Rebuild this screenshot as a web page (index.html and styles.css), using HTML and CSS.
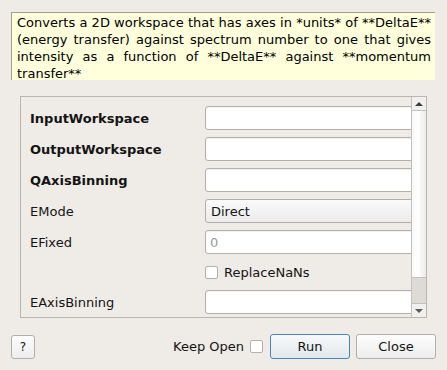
FILE: index.html
```html
<!DOCTYPE html>
<html lang="en">
<head>
    <meta charset="UTF-8">
    <title>ConvertSpectrumAxis</title>
    <link rel="stylesheet" href="styles.css">
</head>
<body>

<div class="dialog">
    <div class="description">Converts a 2D workspace that has axes in *units* of **DeltaE** (energy transfer) against spectrum number to one that gives intensity as a function of **DeltaE** against **momentum transfer**</div>

    <div class="scroll-area">
        <div class="viewport">
            <div class="props">
                <label class="name required">InputWorkspace</label>
                <input class="field" type="text">

                <label class="name required">OutputWorkspace</label>
                <input class="field" type="text">

                <label class="name required">QAxisBinning</label>
                <input class="field" type="text">

                <label class="name">EMode</label>
                <div class="field combo">Direct</div>

                <label class="name">EFixed</label>
                <input class="field" type="text" placeholder="0">

                <span class="name"></span>
                <div class="check-row"><span class="checkbox"></span>ReplaceNaNs</div>

                <label class="name">EAxisBinning</label>
                <input class="field" type="text">
            </div>
        </div>
        <div class="scrollbar">
            <div class="sb-btn sb-up"><span class="arrow-up"></span></div>
            <div class="sb-handle"></div>
            <div class="sb-track"></div>
            <div class="sb-btn sb-down"><span class="arrow-down"></span></div>
        </div>
    </div>

    <div class="buttons">
        <button class="btn help">?</button>
        <div class="spacer"></div>
        <span class="keep-open">Keep Open</span>
        <span class="checkbox"></span>
        <button class="btn run">Run</button>
        <button class="btn close">Close</button>
    </div>
</div>

</body>
</html>
```

FILE: styles.css
```css
body {
    margin: 0;
    background: #efebe7;
    font-family: 'DejaVu Sans', sans-serif;
    font-size: 13px;
    color: #141414;
}
.dialog {
    width: 447px;
    height: 370px;
    display: flex;
    flex-direction: column;
}
.description {
    margin: 12px 12px 0 11px;
    height: 68px;
    box-sizing: border-box;
    padding: 1px 4px 0 5px;
    background: #ffffdc;
    border-left: 1px solid #a19d99;
    border-top: 1px solid #a19d99;
    line-height: 17px;
    text-align: justify;
    color: #000;
}
.scroll-area {
    margin: 16px 0 0 20px;
    width: 407px;
    height: 222px;
    box-sizing: border-box;
    border: 1px solid #b9b5b1;
    display: flex;
}
.viewport {
    flex: 1;
    overflow: hidden;
}
.props {
    display: grid;
    grid-template-columns: 175px 220px;
    grid-template-rows: 24px 24px 24px 24px 24px 22px 24px;
    row-gap: 7px;
    padding: 9px 0 0 9px;
    align-items: center;
}
.name {
    white-space: nowrap;
}
.required {
    font-weight: bold;
}
.field {
    height: 24px;
    box-sizing: border-box;
    border: 1px solid #b3afab;
    border-radius: 3px;
    background: #fff;
    box-shadow: inset 0 1px 1px rgba(0, 0, 0, 0.06);
    font-family: inherit;
    font-size: 13px;
    padding: 0 4px;
    margin: 0;
    outline: none;
}
.field::placeholder {
    color: #9a9a9a;
}
.combo {
    display: flex;
    align-items: center;
    padding-left: 5px;
    background: linear-gradient(#fafafa, #ebebeb);
    box-shadow: none;
}
.check-row {
    display: flex;
    align-items: center;
    gap: 6px;
}
.checkbox {
    display: inline-block;
    width: 13px;
    height: 13px;
    box-sizing: border-box;
    border: 1px solid #b3afab;
    border-radius: 2px;
    background: #fff;
}
.scrollbar {
    width: 14px;
    border-left: 1px solid #c4c0bc;
    display: flex;
    flex-direction: column;
}
.sb-btn {
    height: 13px;
    flex-shrink: 0;
    display: flex;
    align-items: center;
    justify-content: center;
    background: #f2f0ee;
}
.sb-up {
    border-bottom: 1px solid #c4c0bc;
}
.sb-down {
    border-top: 1px solid #c4c0bc;
}
.arrow-up {
    border-left: 4px solid transparent;
    border-right: 4px solid transparent;
    border-bottom: 4px solid #3c3c3c;
}
.arrow-down {
    border-left: 4px solid transparent;
    border-right: 4px solid transparent;
    border-top: 4px solid #5a5a5a;
}
.sb-handle {
    height: 166px;
    flex-shrink: 0;
    background: linear-gradient(to right, #f9f8f7, #ffffff 40%, #ecebea);
    border-bottom: 1px solid #c4c0bc;
}
.sb-track {
    flex: 1;
    background: #dedad6;
}
.buttons {
    display: flex;
    align-items: center;
    margin: 16px 11px 0 11px;
    height: 25px;
}
.spacer {
    flex: 1;
}
.btn {
    height: 25px;
    box-sizing: border-box;
    border: 1px solid #b3afab;
    border-radius: 3px;
    background: linear-gradient(#fdfdfd, #ededed);
    font-family: inherit;
    font-size: 13px;
    color: #141414;
    padding: 0;
}
.help {
    width: 24px;
    height: 24px;
    font-size: 12px;
}
.keep-open {
    margin-right: 6px;
}
.buttons .checkbox {
    margin-right: 7px;
}
.run {
    width: 80px;
    border-color: #4a86b8;
    background: linear-gradient(#f7f9fb, #e3e8ec);
    margin-right: 6px;
}
.close {
    width: 80px;
}
```
